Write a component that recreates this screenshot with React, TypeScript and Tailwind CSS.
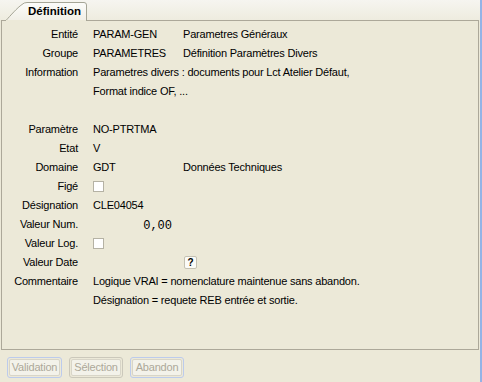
import React from "react";

const font = { fontFamily: '"Liberation Sans", Arial, sans-serif' };

function Row({ label, children }: { label: string; children?: React.ReactNode }) {
  return (
    <>
      <div className="h-[19px] leading-[19px] text-right whitespace-nowrap">{label}</div>
      <div className="h-[19px] leading-[19px] whitespace-nowrap flex items-center">{children}</div>
    </>
  );
}

function Checkbox() {
  return <div className="w-[11px] h-[11px] border border-[#b5b2a4] bg-white" />;
}

function Btn({ label, focus, w }: { label: string; focus?: boolean; w: string }) {
  return (
    <div
      className={`${w} h-[21px] rounded-[3px] border ${
        focus ? "border-[#bccbec]" : "border-[#cbc8bb]"
      } p-[1px]`}
    >
      <div className="w-full h-full rounded-[2px] border border-[#d8d5c8] bg-[#f3f2ea] text-[#aca899] flex items-center justify-center leading-none">
        {label}
      </div>
    </div>
  );
}

export default function App() {
  return (
    <div className="w-[482px] h-[382px] bg-[#ece9d8] flex text-[11px] tracking-[-0.2px] text-black" style={font}>
      <div className="w-[480px] flex flex-col">
        <div className="h-[20px] bg-gradient-to-b from-[#f6f5f0] to-[#eeecdf] flex">
          <div className="relative z-10 ml-[5px] mt-[2px] w-[83px] h-[19px]">
            <svg className="absolute inset-0" width="83" height="19" viewBox="0 0 83 19">
              <defs>
                <linearGradient id="tg" x1="0" y1="0" x2="0" y2="1">
                  <stop offset="0" stopColor="#fcfcfa" />
                  <stop offset="1" stopColor="#f1efe6" />
                </linearGradient>
              </defs>
              <path
                d="M0.5 19 C 6 13, 12 6, 17 2.5 Q 19 0.5 22 0.5 L 79 0.5 Q 81.5 0.5 81.5 3 L 81.5 19 Z"
                fill="url(#tg)"
                stroke="#a5a596"
                strokeWidth="1"
              />
              <rect x="1" y="18" width="80" height="1" fill="#ece9d8" />
            </svg>
            <span className="relative block pl-[23px] pt-[1px] leading-[16px] font-bold text-[11.5px] tracking-normal">
              Définition
            </span>
          </div>
        </div>
        <div className="ml-[1px] w-[478px] h-[330px] border border-[#aca899] pt-[4px]">
          <div className="grid grid-cols-[76px_1fr] gap-x-[15px]">
            <Row label="Entité">
              <span className="w-[90px]">PARAM-GEN</span>
              <span>Parametres Généraux</span>
            </Row>
            <Row label="Groupe">
              <span className="w-[90px]">PARAMETRES</span>
              <span>Définition Paramètres Divers</span>
            </Row>
            <Row label="Information">Parametres divers : documents pour Lct Atelier Défaut,</Row>
            <Row label="">Format indice OF, ...</Row>
            <Row label="" />
            <Row label="Paramètre">NO-PTRTMA</Row>
            <Row label="Etat">V</Row>
            <Row label="Domaine">
              <span className="w-[90px]">GDT</span>
              <span>Données Techniques</span>
            </Row>
            <Row label="Figé">
              <Checkbox />
            </Row>
            <Row label="Désignation">CLE04054</Row>
            <Row label="Valeur Num.">
              <span
                className="w-[79px] text-right text-[12px] tracking-normal pt-[3px]"
                style={{ fontFamily: '"Liberation Mono", "Courier New", monospace' }}
              >
                0,00
              </span>
            </Row>
            <Row label="Valeur Log.">
              <Checkbox />
            </Row>
            <Row label="Valeur Date">
              <div className="ml-[91px] w-[13px] h-[13px] border border-[#c4c1b2] rounded-[2px] bg-[#fbfbf7] flex items-center justify-center font-bold text-[10px] leading-none tracking-normal">
                ?
              </div>
            </Row>
            <Row label="Commentaire">Logique VRAI = nomenclature maintenue sans abandon.</Row>
            <Row label="">Désignation = requete REB entrée et sortie.</Row>
          </div>
        </div>
        <div className="flex mt-[7px] ml-[7px] gap-[7px]">
          <Btn label="Validation" focus w="w-[55px]" />
          <Btn label="Sélection" w="w-[54px]" />
          <Btn label="Abandon" focus w="w-[54px]" />
        </div>
      </div>
      <div className="w-[2px] bg-[#94b3e6]" />
    </div>
  );
}
